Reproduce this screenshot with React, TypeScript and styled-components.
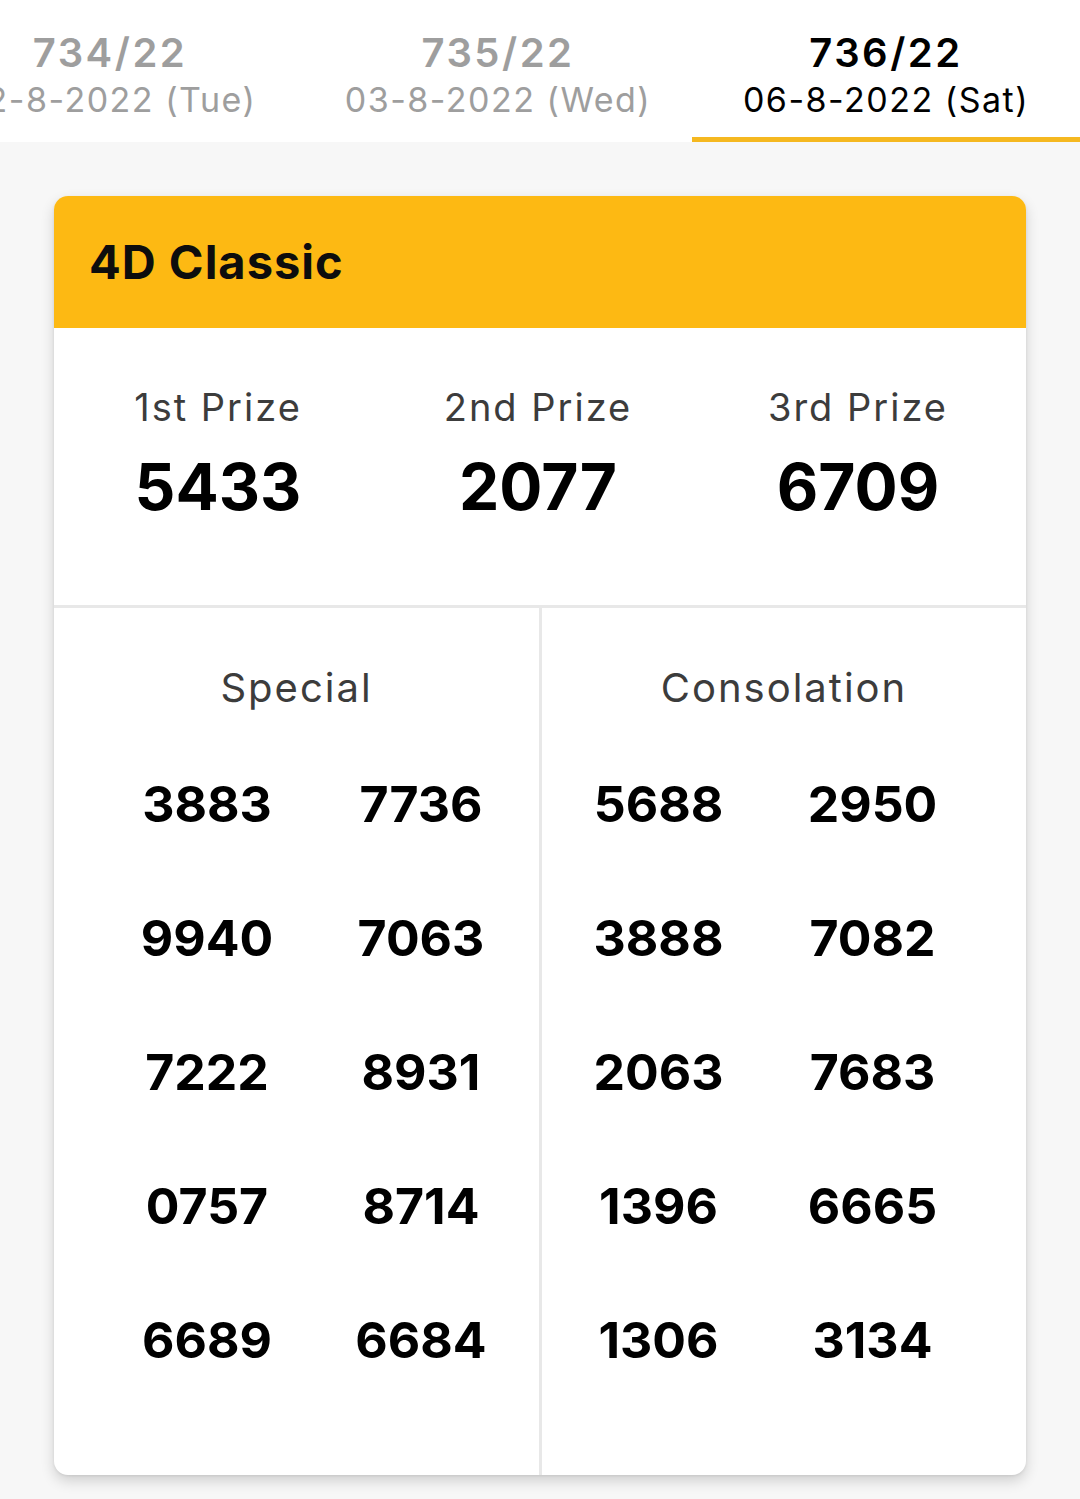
import styled, { createGlobalStyle } from "styled-components";

const GlobalStyle = createGlobalStyle`
  html, body {
    margin: 0;
    padding: 0;
    background: #f7f7f7;
    font-family: Inter, "Noto Sans", "Liberation Sans", sans-serif;
    color: #111;
  }
  * { box-sizing: border-box; }
`;

interface Draw {
  id: string;
  date: string;
}

const draws: Draw[] = [
  { id: "734/22", date: "02-8-2022 (Tue)" },
  { id: "735/22", date: "03-8-2022 (Wed)" },
  { id: "736/22", date: "06-8-2022 (Sat)" }
];

const topPrizes = [
  { label: "1st Prize", value: "5433" },
  { label: "2nd Prize", value: "2077" },
  { label: "3rd Prize", value: "6709" }
];

const special = ["3883", "7736", "9940", "7063", "7222", "8931", "0757", "8714", "6689", "6684"];
const consolation = ["5688", "2950", "3888", "7082", "2063", "7683", "1396", "6665", "1306", "3134"];

export default function App() {
  const activeIndex = 2;

  return (
    <Page>
      <GlobalStyle />
      <TabBar>
        <TabTrack>
          {draws.map((draw, i) => (
            <Tab key={draw.id} $active={i === activeIndex}>
              <TabNumber>{draw.id}</TabNumber>
              <TabDate>{draw.date}</TabDate>
            </Tab>
          ))}
        </TabTrack>
      </TabBar>

      <Card>
        <CardHeader>4D Classic</CardHeader>

        <TopPrizes>
          {topPrizes.map((prize) => (
            <PrizeCell key={prize.label}>
              <PrizeLabel>{prize.label}</PrizeLabel>
              <PrizeValue>{prize.value}</PrizeValue>
            </PrizeCell>
          ))}
        </TopPrizes>

        <Lower>
          <Group $side="left">
            <GroupLabel>Special</GroupLabel>
            <NumberGrid $side="left">
              {special.map((n, i) => (
                <Num key={i}>{n}</Num>
              ))}
            </NumberGrid>
          </Group>
          <Group $side="right">
            <GroupLabel>Consolation</GroupLabel>
            <NumberGrid $side="right">
              {consolation.map((n, i) => (
                <Num key={i}>{n}</Num>
              ))}
            </NumberGrid>
          </Group>
        </Lower>
      </Card>
    </Page>
  );
}

const Page = styled.div`
  width: 1080px;
  min-height: 1499px;
  background: #f7f7f7;
  overflow: hidden;
`;

const TabBar = styled.div`
  height: 142px;
  background: #fff;
  overflow: hidden;
`;

const TabTrack = styled.div`
  display: flex;
  margin-left: -84px;
  height: 100%;
`;

const Tab = styled.div<{ $active: boolean }>`
  flex: 0 0 388px;
  display: flex;
  flex-direction: column;
  align-items: center;
  padding-top: 28px;
  color: ${({ $active }) => ($active ? "#000" : "#9e9e9e")};
  border-bottom: 5px solid ${({ $active }) => ($active ? "#f5b820" : "transparent")};
`;

const TabNumber = styled.div`
  font-size: 40px;
  line-height: 50px;
  font-weight: 600;
  letter-spacing: 2.5px;
`;

const TabDate = styled.div`
  font-size: 34px;
  line-height: 44px;
  font-weight: 400;
  letter-spacing: 1.5px;
`;

const Card = styled.div`
  margin: 54px 54px 0;
  background: #fff;
  border-radius: 14px;
  overflow: hidden;
  box-shadow: 0 6px 14px rgba(0, 0, 0, 0.16), 0 1px 3px rgba(0, 0, 0, 0.08);
`;

const CardHeader = styled.div`
  height: 132px;
  background: #fdb913;
  display: flex;
  align-items: center;
  padding-left: 35px;
  padding-bottom: 2px;
  font-size: 47px;
  font-weight: 700;
  letter-spacing: 1px;
  color: #0d0d0d;
`;

const TopPrizes = styled.div`
  display: grid;
  grid-template-columns: repeat(3, 1fr);
  padding: 55px 8px 78px 4px;
  border-bottom: 3px solid #e8e8e8;
`;

const PrizeCell = styled.div`
  display: flex;
  flex-direction: column;
  align-items: center;
  gap: 16px;
`;

const PrizeLabel = styled.div`
  font-size: 38px;
  line-height: 48px;
  color: #3c3c3c;
  letter-spacing: 2px;
`;

const PrizeValue = styled.div`
  font-size: 64px;
  line-height: 80px;
  font-weight: 700;
  color: #000;
`;

const Lower = styled.div`
  display: grid;
  grid-template-columns: 488px 1fr;
`;

const Group = styled.div<{ $side: "left" | "right" }>`
  display: flex;
  flex-direction: column;
  padding: 56px 0 68px;
  border-right: ${({ $side }) => ($side === "left" ? "3px solid #e8e8e8" : "none")};
`;

const GroupLabel = styled.div`
  text-align: center;
  font-size: 40px;
  line-height: 48px;
  color: #3c3c3c;
  letter-spacing: 2px;
  margin-bottom: 25px;
`;

const NumberGrid = styled.div<{ $side: "left" | "right" }>`
  display: grid;
  grid-template-columns: 214px 214px;
  grid-auto-rows: 134px;
  justify-content: center;
  padding-left: ${({ $side }) => ($side === "left" ? "35px" : "0")};
  padding-right: ${({ $side }) => ($side === "right" ? "37px" : "0")};
`;

const Num = styled.div`
  display: flex;
  align-items: center;
  justify-content: center;
  font-size: 50px;
  font-weight: 700;
  color: #000;
`;
